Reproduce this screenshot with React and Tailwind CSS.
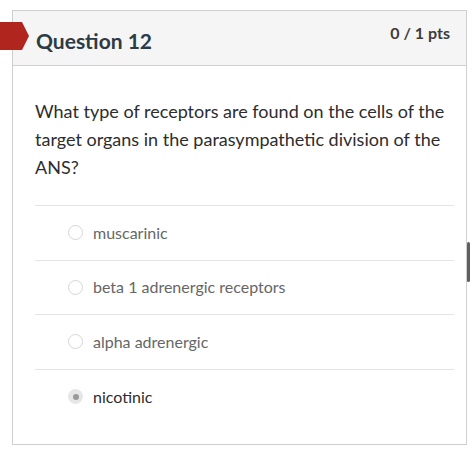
import React from 'react';

const answers = [
  { id: 'a', label: 'muscarinic', selected: false },
  { id: 'b', label: 'beta 1 adrenergic receptors', selected: false },
  { id: 'c', label: 'alpha adrenergic', selected: false },
  { id: 'd', label: 'nicotinic', selected: true },
];

const Radio = ({ selected }) =>
  selected ? (
    <span className="flex h-[15px] w-[15px] shrink-0 items-center justify-center rounded-full bg-[#e6e6e6]">
      <span className="h-[6px] w-[6px] rounded-full bg-[#9a9a9a]" />
    </span>
  ) : (
    <span className="h-[15px] w-[15px] shrink-0 rounded-full border border-[#d6d6d6] bg-white" />
  );

const App = () => {
  return (
    <div
      className="relative min-h-[460px] w-[474px] overflow-hidden bg-white pt-[10px] pl-[12px]"
      style={{ fontFamily: 'Lato, "Open Sans", sans-serif' }}
    >
      {/* Question card */}
      <div className="flex h-[435px] w-[455px] flex-col border border-[#cfcfcf]">
        {/* Header */}
        <div className="flex h-[55px] shrink-0 items-start justify-between border-b border-[#cfcfcf] bg-[#f5f5f5] pl-[23px] pr-[16px]">
          <h2 className="mt-[17px] text-[21px] font-bold leading-[26px] text-[#2d3b45]">Question 12</h2>
          <span className="mt-[10px] text-[16px] font-bold leading-[24px] text-[#3c3c3c]">0 / 1 pts</span>
        </div>

        {/* Body */}
        <div className="flex flex-col pl-[22px] pr-[12px]">
          <p className="mt-[31px] text-[18px] leading-[28px] text-[#2d2d2d]">
            What type of receptors are found on the cells of the target organs in the parasympathetic division of the ANS?
          </p>

          <div className="mt-[24px] flex flex-col border-t border-[#e4e4e4]">
            {answers.map((a, i) => (
              <div
                key={a.id}
                className={`flex h-[54.5px] items-center gap-[10px] pl-[33px] ${
                  i < answers.length - 1 ? 'border-b border-[#e4e4e4]' : ''
                }`}
              >
                <Radio selected={a.selected} />
                <span className={`text-[16px] ${a.selected ? 'text-[#2d2d2d]' : 'text-[#666666]'}`}>
                  {a.label}
                </span>
              </div>
            ))}
          </div>
        </div>
      </div>

      {/* Question flag marker */}
      <svg className="absolute left-0 top-[22px]" width="30" height="28" viewBox="0 0 30 28">
        <polygon points="0,0 22,0 29,14 22,28 0,28" fill="#b0261f" />
      </svg>

      {/* Scrollbar */}
      <div className="absolute left-[467px] top-[242px] h-[40px] w-[3px] rounded-full bg-[#5f5f5f]" />
    </div>
  );
};

export default App;
